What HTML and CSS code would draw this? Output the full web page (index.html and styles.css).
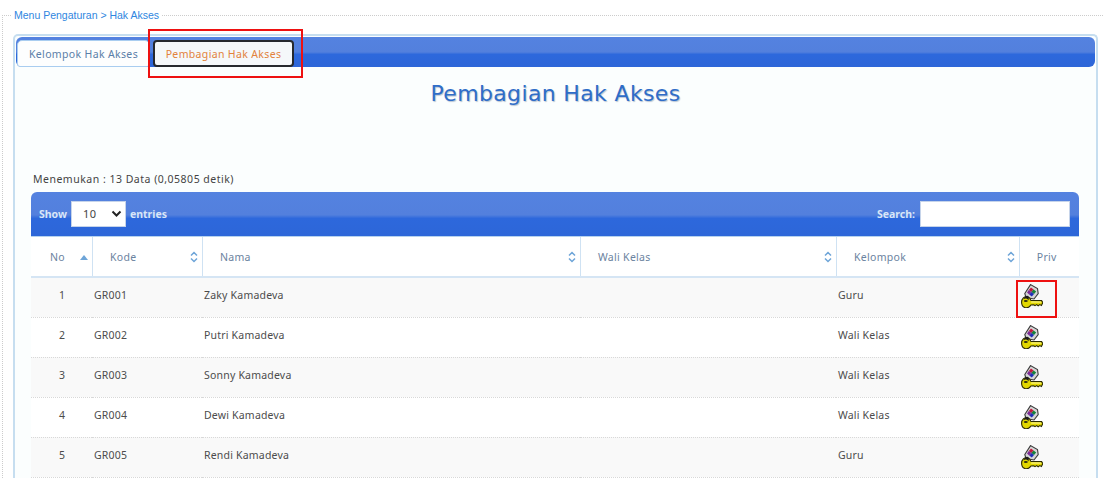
FILE: index.html
```html
<!DOCTYPE html>
<html lang="id">
<head>
<meta charset="utf-8">
<title>Hak Akses</title>
<link rel="stylesheet" href="styles.css">
</head>
<body>
<svg class="defs" width="0" height="0" aria-hidden="true">
  <symbol id="key" viewBox="0 0 22 24">
    <path d="M3.8 9.5 L9.5 0.6 L16.5 4.6 L17.2 9.5 L13 15 L5 13.5 Z" fill="#d6d6d6" stroke="#3a3a3a" stroke-width="1.1"/>
    <path d="M10 3.4 L12.6 5.4 L10.4 8 L7.8 6 Z" fill="#c4183c"/>
    <path d="M12.6 5.4 L15.2 7.4 L13 10 L10.4 8 Z" fill="#16803a"/>
    <path d="M10.4 8 L13 10 L10.8 12.6 L8.2 10.6 Z" fill="#1f2fb8"/>
    <path d="M7.8 6 L10.4 8 L8.2 10.6 L6 8.6 Z" fill="#7c2a94"/>
    <path d="M0.6 18.2 C0.6 14.4 3.4 12.2 6.2 12.8 C8 13.2 9.4 14.6 9.9 16.4 L20.6 16.6 L21.8 18.6 L20.4 21.4 L18.8 20.6 L17.2 21.8 L15.6 20.6 L14 21.6 L12.6 20.8 L9.9 21 C8.8 23 6.6 24 4.2 23.6 C1.9 23.1 0.6 20.8 0.6 18.2 Z" fill="#e2d800" stroke="#2a2a00" stroke-width="1.1"/>
    <path d="M10.2 18 L20.2 18" stroke="#fff68a" stroke-width="1.2"/>
    <path d="M2.6 15.6 C3.4 14.2 6 14 7.6 16.4 L7.8 12.4 C6 11 3.4 12 2.6 15.6 Z" fill="#1c1c1c"/>
    <ellipse cx="4.8" cy="17" rx="2" ry="1.1" fill="#2c2c10"/>
  </symbol>
  <symbol id="sort" viewBox="0 0 8 12">
    <path d="M1 4.5 L4 1.5 L7 4.5 M1 7.5 L4 10.5 L7 7.5" fill="none" stroke="#6ea5d8" stroke-width="1.5"/>
  </symbol>
</svg>
<fieldset class="page">
  <legend class="crumb">Menu Pengaturan &gt; Hak Akses</legend>
  <section class="panel">
    <nav class="tabs">
      <a class="tab">Kelompok Hak Akses</a>
      <a class="tab tab-active">Pembagian Hak Akses</a>
    </nav>
    <h1 class="title">Pembagian Hak Akses</h1>
    <p class="found">Menemukan : 13 Data (0,05805 detik)</p>
    <div class="toolbar">
      <label class="tool-label">Show
        <span class="select"><span>10</span><svg class="chev" width="11" height="8" viewBox="0 0 11 8"><path d="M1.5 1.5 L5.5 5.5 L9.5 1.5" fill="none" stroke="#222" stroke-width="2"/></svg></span>
        entries</label>
      <label class="tool-label search">Search: <span class="search-box"></span></label>
    </div>
    <table class="grid">
      <colgroup>
        <col class="c1"><col class="c2"><col class="c3"><col class="c4"><col class="c5"><col class="c6">
      </colgroup>
      <thead>
        <tr>
          <th class="th-no">No<svg class="asc" width="8" height="5" viewBox="0 0 8 5"><path d="M0 5 L4 0 L8 5 Z" fill="#6ea5d8"/></svg></th>
          <th>Kode<svg class="sort"><use href="#sort"/></svg></th>
          <th>Nama<svg class="sort"><use href="#sort"/></svg></th>
          <th>Wali Kelas<svg class="sort"><use href="#sort"/></svg></th>
          <th>Kelompok<svg class="sort"><use href="#sort"/></svg></th>
          <th class="th-priv">Priv</th>
        </tr>
      </thead>
      <tbody>
        <tr class="odd"><td class="num">1</td><td>GR001</td><td>Zaky Kamadeva</td><td></td><td>Guru</td><td class="priv priv-first"><svg class="key"><use href="#key"/></svg></td></tr>
        <tr><td class="num">2</td><td>GR002</td><td>Putri Kamadeva</td><td></td><td>Wali Kelas</td><td class="priv"><svg class="key"><use href="#key"/></svg></td></tr>
        <tr class="odd"><td class="num">3</td><td>GR003</td><td>Sonny Kamadeva</td><td></td><td>Wali Kelas</td><td class="priv"><svg class="key"><use href="#key"/></svg></td></tr>
        <tr><td class="num">4</td><td>GR004</td><td>Dewi Kamadeva</td><td></td><td>Wali Kelas</td><td class="priv"><svg class="key"><use href="#key"/></svg></td></tr>
        <tr class="odd"><td class="num">5</td><td>GR005</td><td>Rendi Kamadeva</td><td></td><td>Guru</td><td class="priv"><svg class="key"><use href="#key"/></svg></td></tr>
      </tbody>
    </table>
  </section>
</fieldset>
<div class="mark mark-tab"></div>
<div class="mark mark-key"></div>
</body>
</html>
```
FILE: styles.css
```css
html, body {
  margin: 0;
  height: 478px;
  overflow: hidden;
  background: #fff;
}
body {
  position: relative;
  font-family: "Noto Sans", "Open Sans", sans-serif;
  font-size: 11px;
  color: #555;
}
.defs { position: absolute; }
.page {
  margin: 8px 0 0 2px;
  padding: 12px 4px 0 10px;
  width: 1101px;
  box-sizing: border-box;
  height: 470px;
  overflow: hidden;
  border: 0;
  border-top: 1px dotted #ccc;
  border-left: 1px dotted #ccc;
}
.crumb {
  padding: 0 3px 0 2px;
  margin-left: -1px;
  font-family: "Liberation Sans", Arial, sans-serif;
  font-size: 10.5px;
  line-height: 14px;
  color: #2f86e0;
}
.panel {
  border: 2px solid #c6def0;
  border-bottom: 0;
  border-radius: 5px 5px 0 0;
  background: #fbfefe;
  height: 444px;
  padding: 1px;
  box-sizing: border-box;
  width: 1085px;
}
.tabs {
  height: 30px;
  box-sizing: border-box;
  display: flex;
  gap: 3px;
  padding: 3px 0 0 1px;
  border-radius: 6px;
  background: linear-gradient(#5482e0 0, #5380dd 50%, #2d68dc 58%, #2d66d8 100%);
}
.tab {
  width: 133px;
  height: 27px;
  box-sizing: border-box;
  text-align: center;
  line-height: 27px;
  font-size: 10.5px;
  letter-spacing: .35px;
  color: #5b7fa8;
  background: #fdfefe;
  border: 1px solid #a9cdf0;
  border-radius: 5px 5px 3px 3px;
}
.tab-active {
  width: 141px;
  color: #e2823c;
  background: #f5f8fa;
  border: 2px solid #26292e;
  border-radius: 4px;
  line-height: 25px;
}
.title {
  margin: 11px 0 0;
  text-align: center;
  font-family: "DejaVu Sans", sans-serif;
  font-size: 22px;
  font-weight: 400;
  line-height: 32px;
  letter-spacing: .35px;
  color: #2f6dc8;
  text-shadow: 1px 1px 1px #b9c4d2;
}
.found {
  margin: 62px 0 0 17px;
  font-size: 10.5px;
  line-height: 14px;
  letter-spacing: .5px;
  color: #444;
}
.toolbar {
  margin: 6px 0 0 15px;
  width: 1048px;
  height: 45px;
  box-sizing: border-box;
  display: flex;
  justify-content: space-between;
  align-items: center;
  padding: 0 9px 1px 8px;
  border-radius: 6px 6px 0 0;
  background: linear-gradient(#5482e0 0, #5380dd 52%, #2d68dc 60%, #2d66d8 100%);
  border-bottom: 1px solid #b6d2ee;
}
.tool-label {
  display: flex;
  align-items: center;
  gap: 4px;
  color: #d8e6f8;
  font-size: 10.5px;
  font-weight: 700;
}
.select {
  width: 55px;
  height: 26px;
  box-sizing: border-box;
  background: #fff;
  border: 1px solid #c6d4ea;
  display: flex;
  align-items: center;
  justify-content: space-between;
  padding: 0 3px 0 11px;
  font-weight: 400;
  font-size: 11px;
  letter-spacing: .5px;
  color: #444;
}
.search { gap: 5px; }
.search-box {
  width: 150px;
  height: 26px;
  box-sizing: border-box;
  background: #fff;
  border: 1px solid #c6d4ea;
}
.grid {
  margin-left: 15px;
  width: 1048px;
  table-layout: fixed;
  border-collapse: collapse;
  background: #fff;
}
.c1 { width: 61px; }
.c2 { width: 110px; }
.c3 { width: 378px; }
.c4 { width: 256px; }
.c5 { width: 183px; }
.c6 { width: 60px; }
.grid th {
  position: relative;
  height: 40px;
  padding: 0 0 0 17.5px;
  box-sizing: border-box;
  text-align: left;
  font-size: 10.5px;
  font-weight: 400;
  letter-spacing: .3px;
  color: #6b83a0;
  border-right: 1px solid #cfe2f3;
  border-bottom: 2px solid #d5e5f4;
}
.grid th:last-child { border-right: 0; }
.grid .th-no { padding-left: 19px; }
.grid .th-priv { padding: 0 5px 0 0; text-align: center; }
.sort {
  position: absolute;
  right: 4px;
  top: 14px;
  width: 8px;
  height: 12px;
}
.asc {
  position: absolute;
  right: 4px;
  top: 18px;
}
.grid td {
  height: 40px;
  padding: 0 0 4px 2px;
  box-sizing: border-box;
  font-size: 10.5px;
  letter-spacing: .2px;
  color: #4c4c4c;
  border-bottom: 1px dotted #d8d8d8;
}
.grid tr.odd td { background: #f9f9f9; }
.grid .num { text-align: center; padding-left: 1px; }
.grid .priv { text-align: left; padding: 0 0 0 2px; }
.grid .priv-first { padding-bottom: 2px; }
.key {
  display: inline-block;
  width: 22px;
  height: 24px;
  vertical-align: middle;
}
.mark {
  position: absolute;
  border: 2px solid #ee1111;
  box-sizing: border-box;
  pointer-events: none;
}
.mark-tab { left: 148px; top: 29px; width: 155px; height: 49px; }
.mark-key { left: 1016px; top: 280px; width: 41px; height: 38px; }
```
